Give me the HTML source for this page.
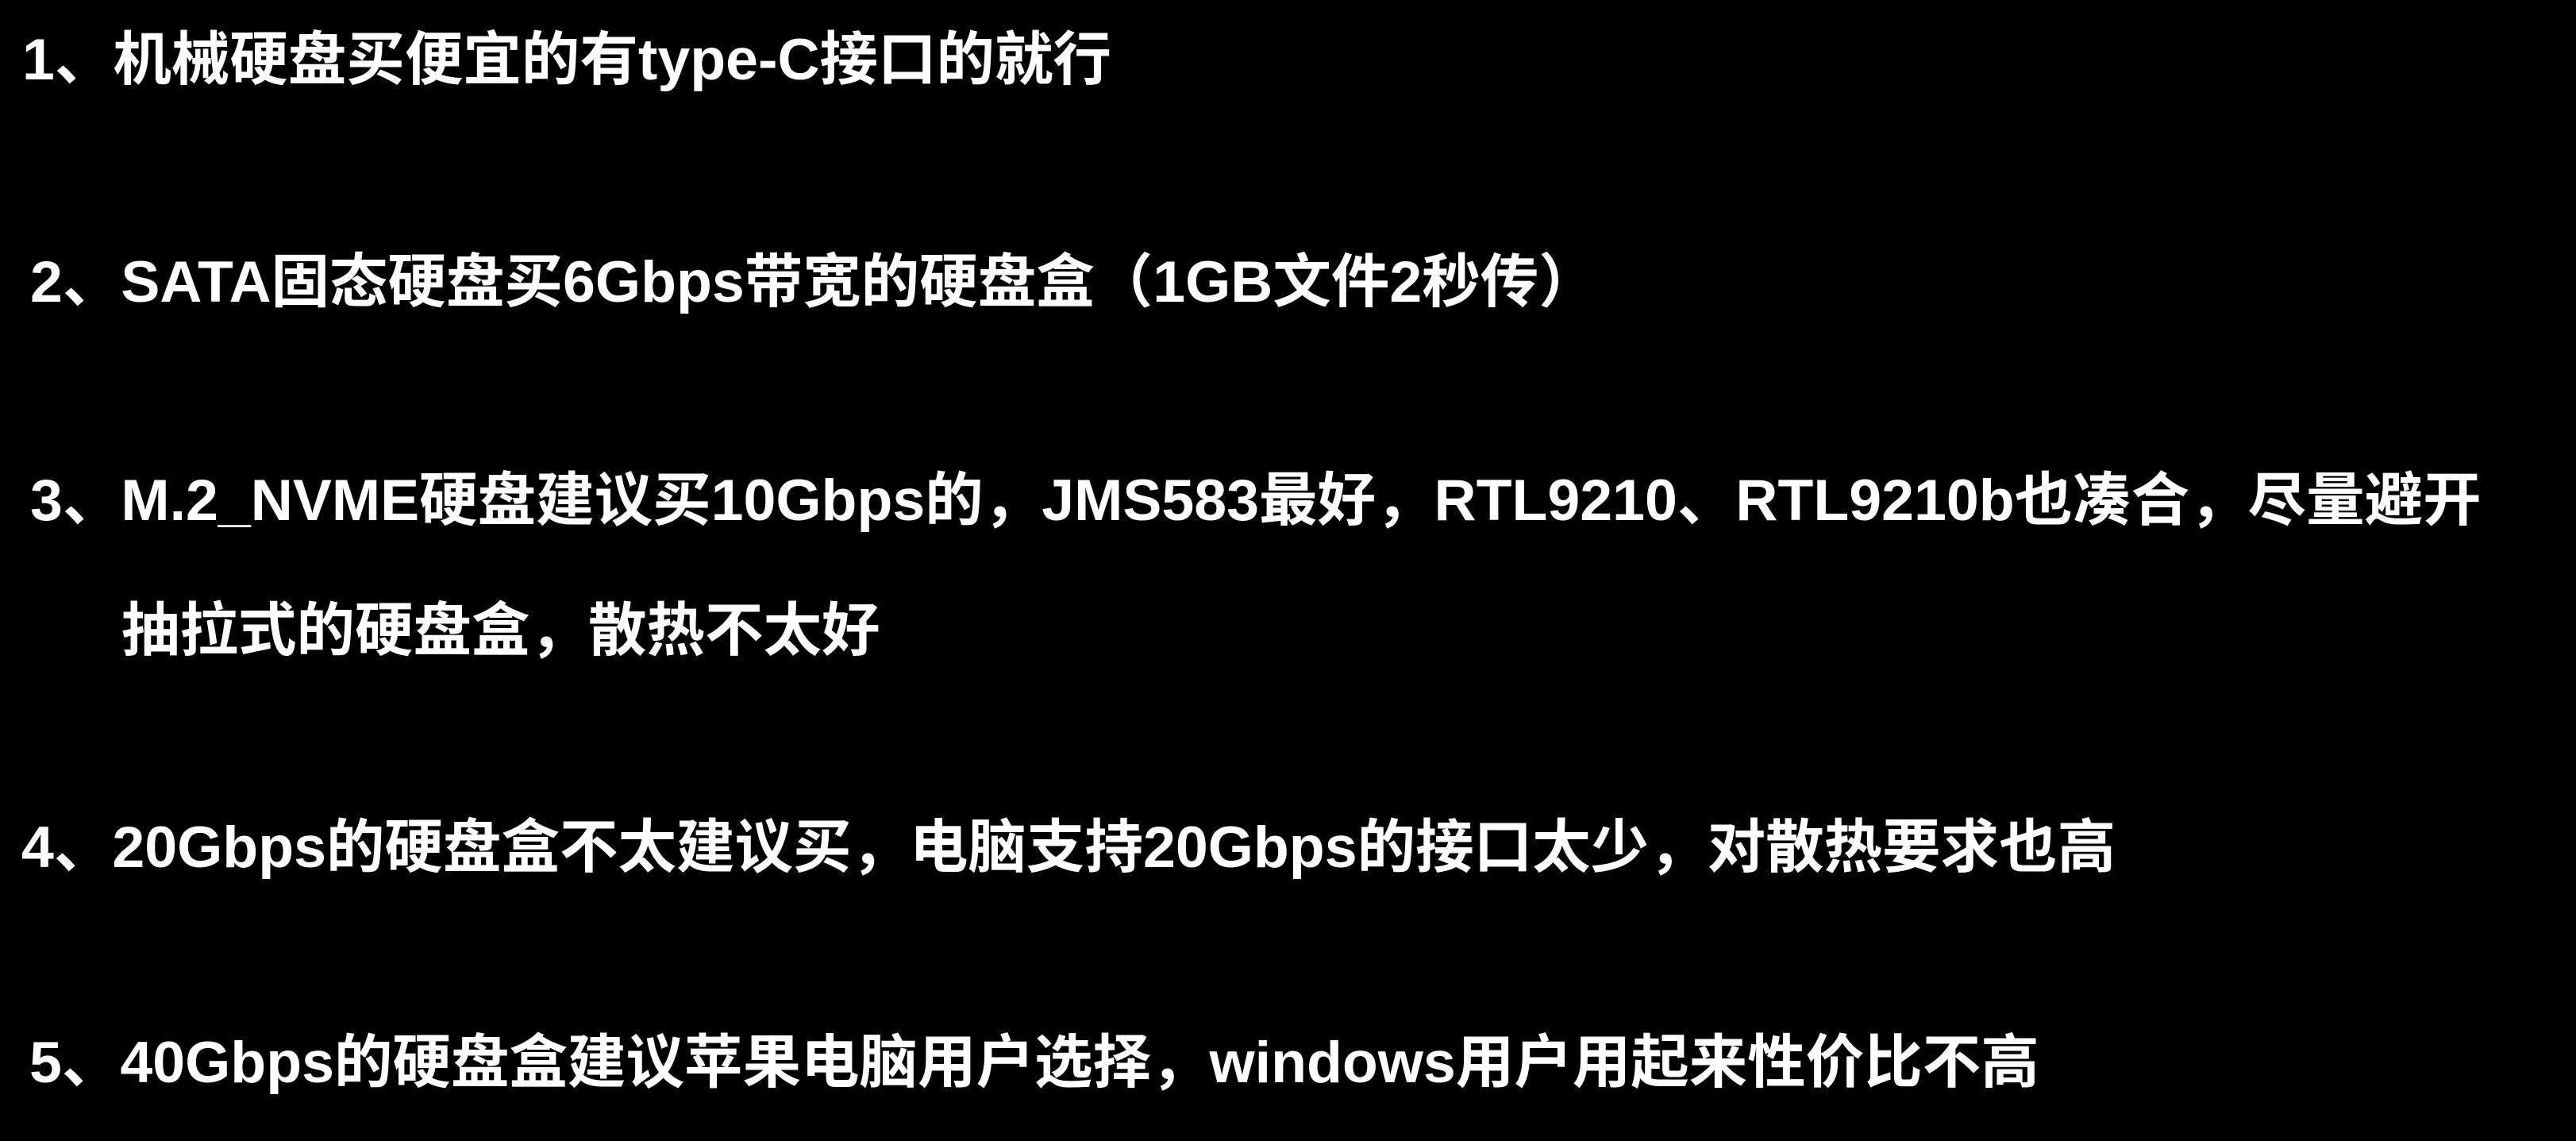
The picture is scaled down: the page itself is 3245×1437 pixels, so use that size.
<!DOCTYPE html>
<html><head><meta charset="utf-8"><style>
html,body{margin:0;padding:0;background:#000;}
body{width:3245px;height:1437px;position:relative;overflow:hidden;}
.l{position:absolute;white-space:nowrap;color:#fff;font-family:"Liberation Sans","Noto Sans CJK SC",sans-serif;font-weight:bold;font-size:73.5px;line-height:74px;}
</style></head><body>
<div class="l" style="left:28px;top:38px">1、机械硬盘买便宜的有type-C接口的就行</div>
<div class="l" style="left:38px;top:318px">2、SATA固态硬盘买6Gbps带宽的硬盘盒（1GB文件2秒传）</div>
<div class="l" style="left:38px;top:593px">3、M.2_NVME硬盘建议买10Gbps的，JMS583最好，RTL9210、RTL9210b也凑合，尽量避开</div>
<div class="l" style="left:153px;top:757px">抽拉式的硬盘盒，散热不太好</div>
<div class="l" style="left:27px;top:1030px">4、20Gbps的硬盘盒不太建议买，电脑支持20Gbps的接口太少，对散热要求也高</div>
<div class="l" style="left:37px;top:1301px">5、40Gbps的硬盘盒建议苹果电脑用户选择，windows用户用起来性价比不高</div>
</body></html>
